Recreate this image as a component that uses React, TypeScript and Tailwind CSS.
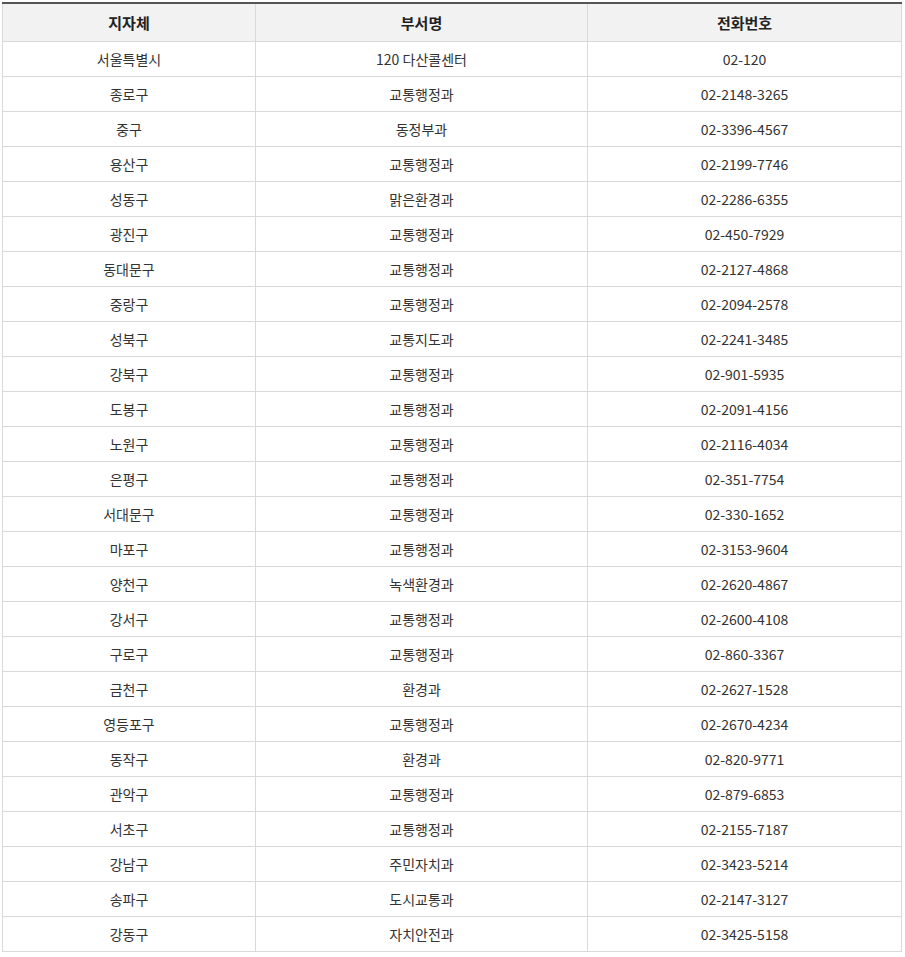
const rows: [string, string, string][] = [
  ["서울특별시", "120 다산콜센터", "02-120"],
  ["종로구", "교통행정과", "02-2148-3265"],
  ["중구", "동정부과", "02-3396-4567"],
  ["용산구", "교통행정과", "02-2199-7746"],
  ["성동구", "맑은환경과", "02-2286-6355"],
  ["광진구", "교통행정과", "02-450-7929"],
  ["동대문구", "교통행정과", "02-2127-4868"],
  ["중랑구", "교통행정과", "02-2094-2578"],
  ["성북구", "교통지도과", "02-2241-3485"],
  ["강북구", "교통행정과", "02-901-5935"],
  ["도봉구", "교통행정과", "02-2091-4156"],
  ["노원구", "교통행정과", "02-2116-4034"],
  ["은평구", "교통행정과", "02-351-7754"],
  ["서대문구", "교통행정과", "02-330-1652"],
  ["마포구", "교통행정과", "02-3153-9604"],
  ["양천구", "녹색환경과", "02-2620-4867"],
  ["강서구", "교통행정과", "02-2600-4108"],
  ["구로구", "교통행정과", "02-860-3367"],
  ["금천구", "환경과", "02-2627-1528"],
  ["영등포구", "교통행정과", "02-2670-4234"],
  ["동작구", "환경과", "02-820-9771"],
  ["관악구", "교통행정과", "02-879-6853"],
  ["서초구", "교통행정과", "02-2155-7187"],
  ["강남구", "주민자치과", "02-3423-5214"],
  ["송파구", "도시교통과", "02-2147-3127"],
  ["강동구", "자치안전과", "02-3425-5158"],
];

export default function App() {
  return (
    <div className="bg-white pl-[2px] pt-[2px] font-['Noto_Sans_CJK_KR','Noto_Sans',sans-serif] text-[#333]">
      <table className="w-[899px] table-fixed border-collapse border-t-2 border-t-[#555] text-[14px]">
        <colgroup>
          <col className="w-[253px]" />
          <col className="w-[332px]" />
          <col className="w-[314px]" />
        </colgroup>
        <thead>
          <tr className="h-[38px] bg-[#f2f2f2]">
            {["지자체", "부서명", "전화번호"].map(h => (
              <th key={h} className="border border-t-0 border-[#d9d9d9] text-center text-[15px] font-bold text-[#222] leading-none">
                {h}
              </th>
            ))}
          </tr>
        </thead>
        <tbody>
          {rows.map(r => (
            <tr key={r[0]} className="h-[35px]">
              {r.map((c, i) => (
                <td key={i} className="border border-[#d9d9d9] text-center leading-none">
                  {c}
                </td>
              ))}
            </tr>
          ))}
        </tbody>
      </table>
    </div>
  );
}
